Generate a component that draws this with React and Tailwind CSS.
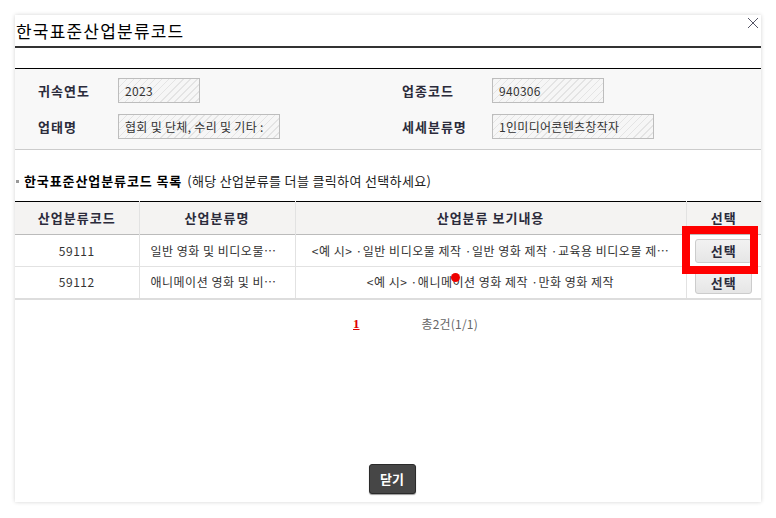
import React from 'react';

const hatch =
  'bg-[repeating-linear-gradient(135deg,#e4e4e4_0px,#e4e4e4_1px,#f6f6f6_1px,#f6f6f6_5px)]';

const rows = [
  {
    code: '59111',
    name: '일반 영화 및 비디오물…',
    desc: '<예 시> ·일반 비디오물 제작 ·일반 영화 제작 ·교육용 비디오물 제…',
  },
  {
    code: '59112',
    name: '애니메이션 영화 및 비…',
    desc: '<예 시> ·애니메이션 영화 제작 ·만화 영화 제작',
  },
];

function Field({ label, value, width, labelWidth }) {
  return (
    <div className="flex items-center">
      <span className={`${labelWidth} text-[13px] font-bold tracking-[1px] text-[#2b2b3b]`}>{label}</span>
      <div
        className={`${hatch} ${width} h-[25px] border border-[#bdbdbd] px-[6px] flex items-center text-[12px] tracking-[0.3px] text-[#333] whitespace-nowrap overflow-hidden`}
      >
        {value}
      </div>
    </div>
  );
}

export default function App() {
  return (
    <div className="w-[776px] h-[518px] bg-white pt-[15px] pl-[15px] font-['Noto_Sans_CJK_KR','Noto_Sans',sans-serif]">
      <div className="relative w-[746px] h-[487px] bg-white shadow-[0_0_4px_rgba(0,0,0,0.18)] flex flex-col">
        {/* title */}
        <div className="h-[33px] border-b-2 border-[#333] flex items-center pl-[1px]">
          <h1 className="text-[17px] text-black leading-none tracking-[1.2px]">한국표준산업분류코드</h1>
        </div>
        <button className="absolute right-[3px] top-[3px] text-[#555]">
          <svg width="10" height="10" viewBox="0 0 10 10">
            <path d="M0 0 L10 10 M10 0 L0 10" stroke="#556" strokeWidth="1" />
          </svg>
        </button>

        {/* info section */}
        <div className="mt-[20px] border-t border-black border-b border-b-[#cccccc] bg-[#f8f8f8] pt-[9px] pb-[10px]">
          <div className="grid grid-cols-[364px_1fr] gap-y-[11px] pl-[23px]">
            <Field label="귀속연도" value="2023" width="w-[82px]" labelWidth="w-[80px]" />
            <Field label="업종코드" value="940306" width="w-[112px]" labelWidth="w-[90px]" />
            <Field label="업태명" value="협회 및 단체, 수리 및 기타 :" width="w-[162px]" labelWidth="w-[80px]" />
            <Field label="세세분류명" value="1인미디어콘텐츠창작자" width="w-[162px]" labelWidth="w-[90px]" />
          </div>
        </div>

        {/* list title */}
        <div className="mt-[22px] flex items-center h-[18px] text-[13px]">
          <span className="w-[3px] h-[3px] bg-[#999] mr-[5px] ml-[1px]" />
          <span className="font-bold text-black tracking-[0.9px]">한국표준산업분류코드 목록</span>
          <span className="ml-[5px] text-[#222] tracking-[0.35px]">(해당 산업분류를 더블 클릭하여 선택하세요)</span>
        </div>

        {/* table */}
        <table className="relative mt-[11px] w-full border-collapse text-[12px] tracking-[0.5px] text-[#333]">
          <colgroup>
            <col className="w-[124px]" />
            <col className="w-[156px]" />
            <col className="w-[391px]" />
            <col />
          </colgroup>
          <thead>
            <tr className="h-[33px] bg-[#f4f3f2] border-t border-black border-b border-b-[#bbbbbb]">
              <th className="font-bold text-[13px] tracking-[1px] text-[#2b2b3b] border-r border-[#e2e2e2]">산업분류코드</th>
              <th className="font-bold text-[13px] tracking-[1px] text-[#2b2b3b] border-r border-[#e2e2e2]">산업분류명</th>
              <th className="font-bold text-[13px] tracking-[1px] text-[#2b2b3b] border-r border-[#e2e2e2]">산업분류 보기내용</th>
              <th className="font-bold text-[13px] tracking-[1px] text-[#2b2b3b]">선택</th>
            </tr>
          </thead>
          <tbody>
            {rows.map((r, i) => (
              <tr
                key={r.code}
                className={`h-[32px] ${i === rows.length - 1 ? 'border-b-2 border-[#dddddd]' : 'border-b border-[#e2e2e2]'}`}
              >
                <td className="text-center border-r border-[#e2e2e2]">{r.code}</td>
                <td className="pl-[11px] border-r border-[#e2e2e2] whitespace-nowrap">{r.name}</td>
                <td className="text-center border-r border-[#e2e2e2] whitespace-nowrap">{r.desc}</td>
                <td className="text-center">
                  <button className="w-[57px] h-[24px] rounded-[3px] border border-[#cccccc] bg-gradient-to-b from-[#f2f2f2] to-[#e6e6e6] text-[13px] font-bold tracking-[1px] text-[#2b2b3b]">
                    선택
                  </button>
                </td>
              </tr>
            ))}
          </tbody>
        </table>

        {/* pagination */}
        <div className="relative mt-[17px] flex items-center h-[14px]">
          <a className="ml-[338px] font-['Liberation_Serif',serif] font-bold text-[13px] text-[#e00000] underline">1</a>
          <span className="ml-[62px] text-[12px] tracking-[0.2px] text-[#666]">총2건(1/1)</span>
        </div>

        <div className="flex-1" />

        <div className="flex justify-center pb-[8px] pl-[8px]">
          <button className="w-[47px] h-[30px] rounded-[3px] bg-[#464646] border border-[#2a2a2a] shadow-[0_1px_1px_rgba(0,0,0,0.4)] text-white text-[13px] font-bold">
            닫기
          </button>
        </div>

        {/* annotation overlays */}
        <div className="absolute left-[667px] top-[211px] w-[76px] h-[48px] border-[8px] border-[#ff0000]" />
        <div className="absolute left-[436px] top-[258px] w-[9px] h-[9px] rounded-full bg-[#ee0000]" />
      </div>
    </div>
  );
}
